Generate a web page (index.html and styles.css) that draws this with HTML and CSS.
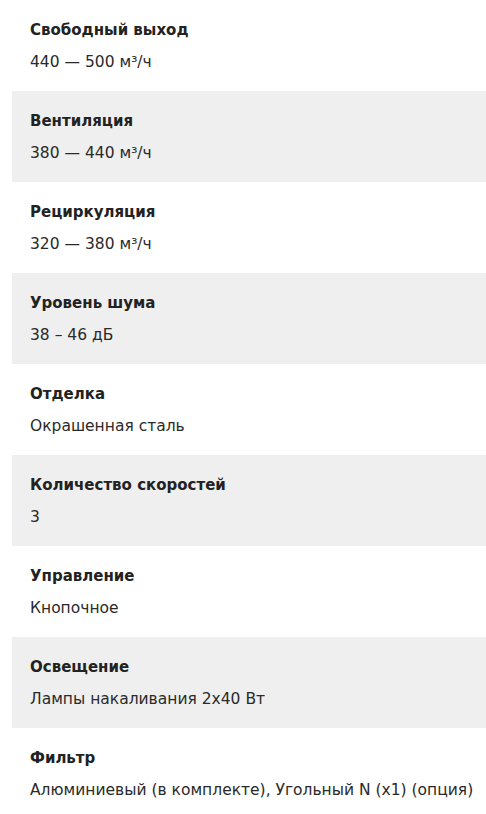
FILE: index.html
```html
<!DOCTYPE html>
<html lang="ru">
<head>
<meta charset="utf-8">
<link rel="stylesheet" href="styles.css">
</head>
<body>
<div class="specs">
  <div class="row"><div class="name">Свободный выход</div><div class="value">440 — 500 м³/ч</div></div>
  <div class="row alt"><div class="name">Вентиляция</div><div class="value">380 — 440 м³/ч</div></div>
  <div class="row"><div class="name">Рециркуляция</div><div class="value">320 — 380 м³/ч</div></div>
  <div class="row alt"><div class="name">Уровень шума</div><div class="value">38 – 46 дБ</div></div>
  <div class="row"><div class="name">Отделка</div><div class="value">Окрашенная сталь</div></div>
  <div class="row alt"><div class="name">Количество скоростей</div><div class="value">3</div></div>
  <div class="row"><div class="name">Управление</div><div class="value">Кнопочное</div></div>
  <div class="row alt"><div class="name">Освещение</div><div class="value">Лампы накаливания 2x40 Вт</div></div>
  <div class="row"><div class="name">Фильтр</div><div class="value">Алюминиевый (в комплекте), Угольный N (x1) (опция)</div></div>
</div>
</body>
</html>
```
FILE: styles.css
```css
html, body {
  margin: 0;
  padding: 0;
  background: #ffffff;
}
body {
  font-family: "DejaVu Sans", sans-serif;
  color: #222222;
}
.specs {
  display: flex;
  flex-direction: column;
  padding-left: 12px;
}
.row {
  height: 91px;
  box-sizing: border-box;
  padding: 20px 0 0 18px;
  display: flex;
  flex-direction: column;
  gap: 12px;
}
.row.alt {
  background: #efefef;
}
.name {
  font-size: 15px;
  font-weight: bold;
  line-height: 20px;
}
.value {
  font-size: 15.5px;
  line-height: 20px;
  white-space: nowrap;
  color: #2a2a2a;
}
```
